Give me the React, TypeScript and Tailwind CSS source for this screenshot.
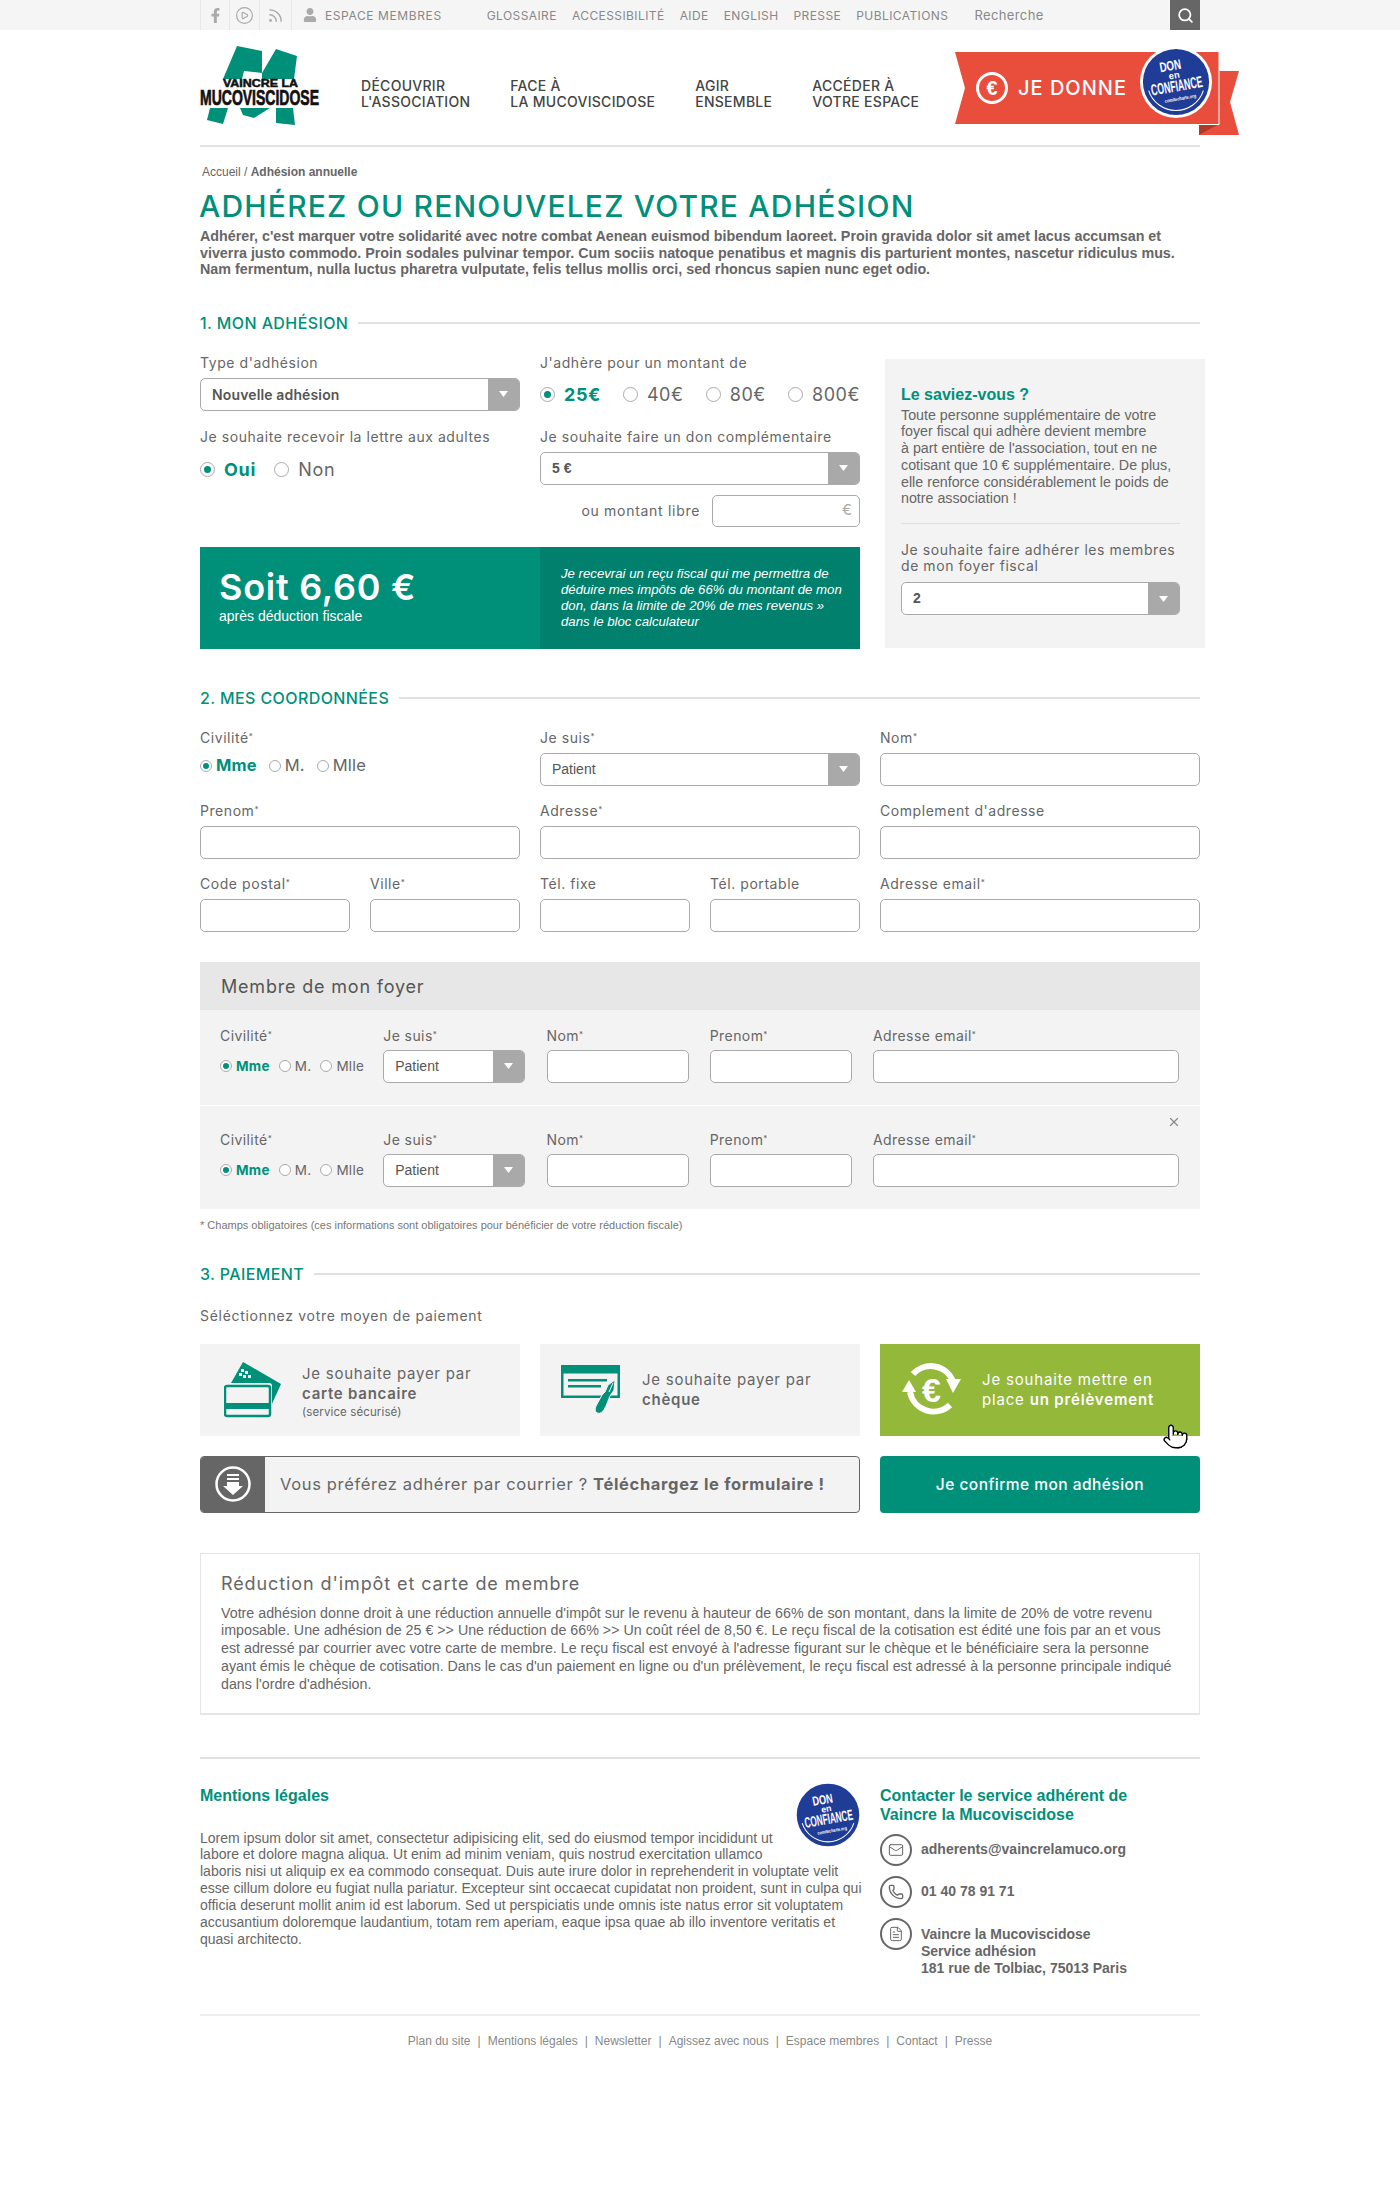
import React from 'react';
import { CirclePlay, FileText, Mail, Phone, Pointer, Rss, Search, X } from 'lucide-react';
import { FaFacebookF, FaUser } from 'react-icons/fa';

const arial = "[font-family:'Liberation_Sans',Arial,sans-serif]";

const Badge = ({ size }: { size: number }) => (
    <svg width={size} height={size} viewBox="0 0 100 100">
        <circle cx="50" cy="50" r="50" fill="#fff" />
        <circle cx="50" cy="50" r="46" fill="#1f3c96" />
        <path d="M12 62 A40 40 0 0 0 88 62" fill="none" stroke="#fff" strokeWidth="1.5" />
        <g transform="rotate(-10 50 50)" fill="#fff" textAnchor="middle" fontFamily="'Liberation Sans', Arial, sans-serif">
            <text x="46" y="33" fontSize="19" fontWeight="700" textLength="30" lengthAdjust="spacingAndGlyphs">DON</text>
            <text x="49" y="45" fontSize="13" fontWeight="700">en</text>
            <text x="50" y="63" fontSize="22" fontWeight="700" textLength="72" lengthAdjust="spacingAndGlyphs">CONFIANCE</text>
            <text x="52" y="76" fontSize="7" fontWeight="700" textLength="44" lengthAdjust="spacingAndGlyphs">comitecharte.org</text>
        </g>
    </svg>
);

const Logo = () => (
    <svg width="122" height="80" viewBox="0 0 122 80" className="overflow-visible">
        <g fill="#00907a">
            <polygon points="37,1 62,6 62,28 76,4 97,11 94,34 62,34 62,28 44,26 42,34 23,34" />
            <polygon points="10,63 28,63 23,79 7,75" />
            <polygon points="40,63 70,63 54,73 43,70" />
            <polygon points="76,63 93,63 95,80 76,78" />
        </g>
        <text x="23" y="41.5" fontSize="10" fontWeight="700" fontFamily="'Liberation Sans', Arial, sans-serif" textLength="75" lengthAdjust="spacingAndGlyphs" stroke="#111" strokeWidth="0.5" fill="#111">VAINCRE LA</text>
        <text x="0" y="60" fontSize="22" fontWeight="700" fontFamily="'Liberation Sans', Arial, sans-serif" textLength="119" lengthAdjust="spacingAndGlyphs" stroke="#111" strokeWidth="0.7" fill="#111">MUCOVISCIDOSE</text>
    </svg>
);

const Ribbon = () => (
    <div className="relative w-[284px] h-[83px] -mr-[39px] shrink-0">
        <svg width="284" height="83" viewBox="0 0 284 83" className="absolute inset-0">
            <polygon points="244,19 284,19 275,50 284,83 244,83" fill="#e94e3d" />
            <polygon points="244,72 264,72 244,83" fill="#b03a2a" />
            <polygon points="0,0 264,0 264,72 0,72 10,36" fill="#e94e3d" />
            <path d="M264 0 V72.5 H244" fill="none" stroke="#fff" />
            <circle cx="37" cy="36" r="14.5" fill="none" stroke="#fff" strokeWidth="3" />
            <text x="37" y="43" fontSize="20" fontWeight="700" fill="#fff" textAnchor="middle" fontFamily="'Liberation Sans', Arial, sans-serif">€</text>
        </svg>
        <span className="absolute left-[63px] top-[24px] text-[20px] leading-[24px] font-medium text-white tracking-[0.05em] whitespace-nowrap">JE DONNE</span>
        <div className="absolute left-[185px] -top-[6px]">
            <Badge size={72} />
        </div>
    </div>
);

const SectionTitle = ({ children }: { children: React.ReactNode }) => (
    <div className="flex items-center gap-[10px] h-[20px]">
        <span className="text-[16px] font-medium text-[#00907a] uppercase whitespace-nowrap tracking-[0.025em]">{children}</span>
        <div className="flex-1 h-[2px] bg-[#e0e0e0]" />
    </div>
);

const Label = ({ children }: { children: React.ReactNode }) => (
    <div className="text-[14px] leading-[16px] text-[#666] mb-[7px] whitespace-nowrap tracking-[0.04em]">{children}</div>
);

const Input = () => <div className="h-[33px] rounded-[5px] border border-[#aaa] bg-white" />;

const Select = ({ value, bold, sans }: { value: string; bold?: boolean; sans?: boolean }) => (
    <div className="flex h-[33px] rounded-[5px] border border-[#aaa] bg-white overflow-hidden">
        <div className={`flex-1 flex items-center pl-[11px] text-[#555] ${sans ? 'text-[14px] font-semibold tracking-[0.01em]' : `${arial} text-[14px]`} ${bold ? 'font-bold' : ''}`}>{value}</div>
        <div className="w-[31px] bg-[#a9a9a9] flex items-center justify-center">
            <svg width="9" height="6" viewBox="0 0 9 6"><polygon points="0,0 9,0 4.5,6" fill="#fff" /></svg>
        </div>
    </div>
);

const Radio = ({ label, checked, small }: { label: string; checked?: boolean; small?: boolean }) => (
    <div className={`flex items-center ${small ? 'gap-[4px]' : 'gap-[9px]'}`}>
        <span className={`rounded-full border border-[#aaa] bg-white flex items-center justify-center shrink-0 ${small ? 'w-[12px] h-[12px]' : 'w-[15px] h-[15px]'}`}>
            {checked && <span className={`rounded-full bg-[#00907a] ${small ? 'w-[6px] h-[6px]' : 'w-[7px] h-[7px]'}`} />}
        </span>
        <span className={checked ? 'font-bold text-[#00907a]' : 'text-[#666]'}>{label}</span>
    </div>
);

const MemberLabel = ({ children }: { children: React.ReactNode }) => (
    <div className="text-[14px] leading-[16px] text-[#666] mb-[6px] tracking-[0.03em]">{children}<sup className="text-[8px]">*</sup></div>
);

const MemberRow = ({ first }: { first?: boolean }) => (
    <div className={`relative grid grid-cols-[142px_142px_142px_142px_306px] gap-x-[21.25px] pl-[20px] pb-[22px] bg-[#f3f3f3] ${first ? 'pt-[18px]' : 'pt-[26px]'}`}>
        {!first && <X className="absolute right-[19px] top-[9px] text-[#888]" size={14} />}
        <div>
            <MemberLabel>Civilité</MemberLabel>
            <div className="flex items-center gap-[9px] h-[33px] text-[13.5px] tracking-[0.02em] whitespace-nowrap">
                <Radio label="Mme" checked small />
                <Radio label="M." small />
                <Radio label="Mlle" small />
            </div>
        </div>
        <div>
            <MemberLabel>Je suis</MemberLabel>
            <Select value="Patient" />
        </div>
        <div>
            <MemberLabel>Nom</MemberLabel>
            <Input />
        </div>
        <div>
            <MemberLabel>Prenom</MemberLabel>
            <Input />
        </div>
        <div>
            <MemberLabel>Adresse email</MemberLabel>
            <Input />
        </div>
    </div>
);

const Star = () => <sup className="text-[8px]">*</sup>;

export default function App() {
    return (
        <div className="bg-white [font-family:Inter,sans-serif] text-[#666] min-h-[2200px]">
            <div className="h-[30px] bg-[#f5f5f5]">
                <div className="w-[1000px] mx-auto h-full flex items-center text-[12px] tracking-[0.035em] text-[#888] uppercase">
                    <div className="flex items-center h-full text-[#aaa]">
                        <div className="w-[30px] h-full flex items-center justify-center border-x border-[#e8e8e8]"><FaFacebookF size={15} /></div>
                        <div className="w-[30px] h-full flex items-center justify-center border-r border-[#e8e8e8]"><CirclePlay size={19} strokeWidth={1.5} /></div>
                        <div className="w-[32px] h-full flex items-center justify-center border-r border-[#e8e8e8]"><Rss size={17} /></div>
                    </div>
                    <FaUser className="text-[#aaa] ml-[11px] mr-[8px]" size={14} />
                    <span className="mt-[2px] tracking-[0.05em]">Espace membres</span>
                    <div className="flex gap-[15px] ml-[45px] mt-[2px]">
                        <span>Glossaire</span>
                        <span>Accessibilité</span>
                        <span>Aide</span>
                        <span>English</span>
                        <span>Presse</span>
                        <span>Publications</span>
                    </div>
                    <span className="ml-[26px] mt-[2px] normal-case text-[13px] tracking-[0.03em]">Recherche</span>
                    <div className="ml-auto w-[30px] h-full bg-[#666] flex items-center justify-center"><Search className="text-white" size={17} strokeWidth={2.5} /></div>
                </div>
            </div>

            <div className="w-[1000px] mx-auto">
                <div className="flex h-[117px] border-b-2 border-[#e3e3e3] items-start">
                    <div className="pt-[15px] mr-[39px]"><Logo /></div>
                    <div className="flex pt-[48px] text-[14px] leading-[16px] font-medium text-[#444] uppercase whitespace-nowrap gap-[40px] flex-1 tracking-[0.02em]">
                        <span>Découvrir<br />L'association</span>
                        <span>Face à<br />la mucoviscidose</span>
                        <span>Agir<br />ensemble</span>
                        <span>Accéder à<br />votre espace</span>
                    </div>
                    <div className="mt-[22px]"><Ribbon /></div>
                </div>

                <div className={`${arial} text-[12px] leading-[14px] mt-[18px] pl-[2px] text-[#666]`}>
                    Accueil / <b>Adhésion annuelle</b>
                </div>
                <h1 className="text-[30px] leading-[36px] font-medium text-[#00907a] uppercase mt-[9px] -ml-[1px] whitespace-nowrap tracking-[1.2px]">Adhérez ou renouvelez votre adhésion</h1>
                <p className={`${arial} text-[14.3px] leading-[16.5px] font-bold text-[#666] mt-[4px] whitespace-nowrap`}>
                    Adhérer, c'est marquer votre solidarité avec notre combat Aenean euismod bibendum laoreet. Proin gravida dolor sit amet lacus accumsan et<br />
                    viverra justo commodo. Proin sodales pulvinar tempor. Cum sociis natoque penatibus et magnis dis parturient montes, nascetur ridiculus mus.<br />
                    Nam fermentum, nulla luctus pharetra vulputate, felis tellus mollis orci, sed rhoncus sapien nunc eget odio.
                </p>

                <div className="mt-[35px]"><SectionTitle>1. Mon adhésion</SectionTitle></div>
                <div className="flex mt-[22px] items-start">
                    <div className="w-[660px]">
                        <div className="grid grid-cols-[320px_320px] gap-x-[20px]">
                            <div>
                                <Label>Type d'adhésion</Label>
                                <Select value="Nouvelle adhésion" sans />
                                <div className="mt-[18px]"><Label>Je souhaite recevoir la lettre aux adultes</Label></div>
                                <div className="flex items-center gap-[18px] text-[18px] tracking-[0.04em] mt-[11px]">
                                    <Radio label="Oui" checked />
                                    <Radio label="Non" />
                                </div>
                            </div>
                            <div>
                                <Label>J'adhère pour un montant de</Label>
                                <div className="flex justify-between text-[18px] tracking-[0.03em] h-[33px] items-center">
                                    <Radio label="25€" checked />
                                    <Radio label="40€" />
                                    <Radio label="80€" />
                                    <Radio label="800€" />
                                </div>
                                <div className="mt-[18px]"><Label>Je souhaite faire un don complémentaire</Label></div>
                                <Select value="5 €" bold />
                                <div className="flex items-center justify-end gap-[12px] mt-[10px]">
                                    <span className="text-[14px] tracking-[0.05em] text-[#666]">ou montant libre</span>
                                    <div className="w-[148px] h-[32px] rounded-[5px] border border-[#aaa] bg-white flex items-center justify-end pr-[7px] text-[15px] text-[#aaa]">€</div>
                                </div>
                            </div>
                        </div>
                        <div className="flex h-[102px] mt-[20px] text-white">
                            <div className="w-[340px] bg-[#00907a] pl-[19px] pt-[20px]">
                                <div className="text-[36px] leading-[40px] font-semibold tracking-[0.02em]">Soit 6,60 €</div>
                                <div className={`${arial} text-[14px] leading-[16px] mt-[1px]`}>après déduction fiscale</div>
                            </div>
                            <div className={`w-[320px] bg-[#00806d] pl-[21px] pt-[19px] ${arial} italic text-[13.2px] leading-[16px] whitespace-nowrap`}>
                                Je recevrai un reçu fiscal qui me permettra de<br />
                                déduire mes impôts de 66% du montant de mon<br />
                                don, dans la limite de 20% de mes revenus »<br />
                                dans le bloc calculateur
                            </div>
                        </div>
                    </div>
                    <div className="w-[320px] h-[289px] ml-[25px] mt-[4px] bg-[#f3f3f3] pl-[16px] pr-[25px] pt-[27px] shrink-0">
                        <div className={`${arial} font-bold text-[16px] leading-[18px] text-[#00907a]`}>Le saviez-vous ?</div>
                        <p className={`${arial} text-[14.25px] leading-[16.8px] text-[#666] mt-[3px] whitespace-nowrap`}>
                            Toute personne supplémentaire de votre<br />
                            foyer fiscal qui adhère devient membre<br />
                            à part entière de l'association, tout en ne<br />
                            cotisant que 10 € supplémentaire. De plus,<br />
                            elle renforce considérablement le poids de<br />
                            notre association !
                        </p>
                        <div className="h-px bg-[#ddd] mt-[16px]" />
                        <div className="text-[14px] leading-[16px] text-[#666] mt-[18px] whitespace-nowrap tracking-[0.04em]">Je souhaite faire adhérer les membres<br />de mon foyer fiscal</div>
                        <div className="mt-[8px]"><Select value="2" bold /></div>
                    </div>
                </div>

                <div className="mt-[39px]"><SectionTitle>2. Mes coordonnées</SectionTitle></div>
                <div className="grid grid-cols-[320px_320px_320px] gap-x-[20px] gap-y-[17px] mt-[22px]">
                    <div>
                        <Label>Civilité<Star /></Label>
                        <div className="flex items-center gap-[12px] text-[16.5px] tracking-[0.01em] h-[26px]">
                            <Radio label="Mme" checked small />
                            <Radio label="M." small />
                            <Radio label="Mlle" small />
                        </div>
                    </div>
                    <div><Label>Je suis<Star /></Label><Select value="Patient" /></div>
                    <div><Label>Nom<Star /></Label><Input /></div>
                    <div><Label>Prenom<Star /></Label><Input /></div>
                    <div><Label>Adresse<Star /></Label><Input /></div>
                    <div><Label>Complement d'adresse</Label><Input /></div>
                    <div className="grid grid-cols-2 gap-x-[20px]">
                        <div><Label>Code postal<Star /></Label><Input /></div>
                        <div><Label>Ville<Star /></Label><Input /></div>
                    </div>
                    <div className="grid grid-cols-2 gap-x-[20px]">
                        <div><Label>Tél. fixe</Label><Input /></div>
                        <div><Label>Tél. portable</Label><Input /></div>
                    </div>
                    <div><Label>Adresse email<Star /></Label><Input /></div>
                </div>

                <div className="mt-[30px]">
                    <div className="h-[48px] bg-[#e7e7e7] flex items-center pl-[21px] pt-[2px] text-[18px] tracking-[0.045em] text-[#555]">Membre de mon foyer</div>
                    <MemberRow first />
                    <div className="h-px bg-white" />
                    <MemberRow />
                </div>
                <div className={`${arial} text-[11px] leading-[14px] mt-[9px] text-[#777]`}>* Champs obligatoires (ces informations sont obligatoires pour bénéficier de votre réduction fiscale)</div>

                <div className="mt-[32px]"><SectionTitle>3. Paiement</SectionTitle></div>
                <div className="text-[14px] tracking-[0.05em] leading-[16px] mt-[24px] text-[#666]">Séléctionnez votre moyen de paiement</div>

                <div className="grid grid-cols-[320px_320px_320px] gap-x-[20px] mt-[20px]">
                    <div className="h-[92px] bg-[#f3f3f3] flex items-center pl-[24px] gap-[18px]">
                        <svg width="60" height="56" viewBox="0 0 60 56">
                            <polygon points="19,0 57,22 47,44 7,21" fill="#00907a" />
                            <g fill="#fff"><rect x="17" y="7" width="3" height="3" /><rect x="21" y="9" width="3" height="3" /><rect x="15" y="11" width="3" height="3" /><rect x="19" y="13" width="3" height="3" /><rect x="24" y="13" width="3" height="3" /></g>
                            <rect x="0" y="21" width="48" height="34" rx="3" fill="#f3f3f3" />
                            <rect x="1" y="24" width="45" height="30" rx="2" fill="#f3f3f3" stroke="#00907a" strokeWidth="2.5" />
                            <rect x="1" y="41" width="45" height="6" fill="#00907a" />
                        </svg>
                        <div className="text-[15px] leading-[20px] text-[#666] tracking-[0.05em] pt-[3px]">
                            Je souhaite payer par<br />
                            <span className="font-semibold">carte bancaire</span><br />
                            <span className="text-[11.5px] leading-[14px] tracking-[0.01em] block mt-[1px]">(service sécurisé)</span>
                        </div>
                    </div>
                    <div className="h-[92px] bg-[#f3f3f3] flex items-center pl-[21px] gap-[21px]">
                        <svg width="60" height="50" viewBox="0 0 60 50">
                            <rect x="0" y="0" width="59" height="33" fill="#00907a" />
                            <rect x="2.5" y="8.5" width="54" height="22" fill="#f3f3f3" />
                            <rect x="7" y="14" width="39" height="2.5" fill="#00907a" />
                            <rect x="7" y="20" width="33" height="2.5" fill="#00907a" />
                            <path d="M54 15 L53 25 L49 31 L45 41 Q41 50 36 48 Q33 46 35 41 L41 30 L44 27 L47 20 Z" fill="#00907a" stroke="#f3f3f3" strokeWidth="1" />
                            <path d="M52 18 L48 27" stroke="#f3f3f3" strokeWidth="1" fill="none" />
                        </svg>
                        <div className="text-[15px] leading-[20px] text-[#666] tracking-[0.05em]">Je souhaite payer par<br /><span className="font-semibold">chèque</span></div>
                    </div>
                    <div className="relative h-[92px] bg-[#93b83a] flex items-center pl-[22px] gap-[21px] text-white">
                        <svg width="59" height="57" viewBox="0 0 59 57">
                            <g fill="none" stroke="#fff" strokeWidth="6">
                                <path d="M11 13 A24 24 0 0 1 51 20" />
                                <path d="M48 44 A24 24 0 0 1 8 31" />
                            </g>
                            <polygon points="44,18 59,18 51,32" fill="#fff" />
                            <polygon points="0,31 14,31 7,19" fill="#fff" />
                            <text x="29.5" y="41" fontSize="34" fontWeight="700" fill="#fff" textAnchor="middle" fontFamily="'Liberation Sans', Arial, sans-serif">€</text>
                        </svg>
                        <div className="text-[15px] leading-[20px] tracking-[0.055em] whitespace-nowrap">Je souhaite mettre en<br />place <span className="font-semibold">un prélèvement</span></div>
                        <Pointer className="absolute left-[282px] top-[79px] text-black" fill="#fff" size={27} strokeWidth={1.2} />
                    </div>
                </div>

                <div className="grid grid-cols-[660px_320px] gap-x-[20px] mt-[20px] h-[57px]">
                    <div className="flex rounded-[4px] border border-[#666] bg-[#f3f3f3] overflow-hidden">
                        <div className="w-[64px] bg-[#666] flex items-center justify-center shrink-0">
                            <svg width="36" height="36" viewBox="0 0 36 36">
                                <circle cx="18" cy="18" r="16.5" fill="none" stroke="#fff" strokeWidth="2.5" />
                                <rect x="12" y="8" width="12" height="2" fill="#fff" />
                                <rect x="12" y="12" width="12" height="2" fill="#fff" />
                                <polygon points="12,16 24,16 24,20 28,20 18,29 8,20 12,20" fill="#fff" />
                            </svg>
                        </div>
                        <div className="flex items-center pl-[15px] text-[16.5px] text-[#666] whitespace-nowrap tracking-[0.04em]">Vous préférez adhérer par courrier ?&nbsp;<b>Téléchargez le formulaire !</b></div>
                    </div>
                    <div className="rounded-[4px] bg-[#00907a] flex items-center justify-center pt-[1px] text-[15.5px] tracking-[0.03em] font-medium text-white">Je confirme mon adhésion</div>
                </div>

                <div className="h-[162px] mt-[40px] border border-[#e5e5e5] border-b-2 pl-[20px] pt-[19px]">
                    <div className="text-[18px] leading-[22px] tracking-[0.05em] text-[#666]">Réduction d'impôt et carte de membre</div>
                    <p className={`${arial} text-[14.25px] leading-[17.8px] text-[#666] mt-[10px] whitespace-nowrap`}>
                        Votre adhésion donne droit à une réduction annuelle d'impôt sur le revenu à hauteur de 66% de son montant, dans la limite de 20% de votre revenu<br />
                        imposable. Une adhésion de 25 € &gt;&gt; Une réduction de 66% &gt;&gt; Un coût réel de 8,50 €. Le reçu fiscal de la cotisation est édité une fois par an et vous<br />
                        est adressé par courrier avec votre carte de membre. Le reçu fiscal est envoyé à l'adresse figurant sur le chèque et le bénéficiaire sera la personne<br />
                        ayant émis le chèque de cotisation. Dans le cas d'un paiement en ligne ou d'un prélèvement, le reçu fiscal est adressé à la personne principale indiqué<br />
                        dans l'ordre d'adhésion.
                    </p>
                </div>

                <div className="h-[2px] bg-[#e0e0e0] mt-[42px]" />

                <div className={`flex h-[255px] pt-[28px] ${arial}`}>
                    <div className="w-[662px] shrink-0">
                        <div className="float-right -mt-[6px]"><Badge size={68} /></div>
                        <div className="font-bold text-[16px] leading-[18px] text-[#00907a]">Mentions légales</div>
                        <p className="text-[14px] leading-[16.9px] text-[#666] mt-[25px] whitespace-nowrap">
                            Lorem ipsum dolor sit amet, consectetur adipisicing elit, sed do eiusmod tempor incididunt ut<br />
                            labore et dolore magna aliqua. Ut enim ad minim veniam, quis nostrud exercitation ullamco<br />
                            laboris nisi ut aliquip ex ea commodo consequat. Duis aute irure dolor in reprehenderit in voluptate velit<br />
                            esse cillum dolore eu fugiat nulla pariatur. Excepteur sint occaecat cupidatat non proident, sunt in culpa qui<br />
                            officia deserunt mollit anim id est laborum. Sed ut perspiciatis unde omnis iste natus error sit voluptatem<br />
                            accusantium doloremque laudantium, totam rem aperiam, eaque ipsa quae ab illo inventore veritatis et<br />
                            quasi architecto.
                        </p>
                    </div>
                    <div className="ml-[18px] -mt-[1px]">
                        <div className="font-bold text-[16px] leading-[19px] text-[#00907a] whitespace-nowrap">Contacter le service adhérent de<br />Vaincre la Mucoviscidose</div>
                        <div className="flex gap-[9px] mt-[10px] items-center font-bold text-[14px] text-[#666]">
                            <div className="w-[32px] h-[32px] rounded-full border-2 border-[#666] flex items-center justify-center"><Mail size={16} strokeWidth={1.5} /></div>
                            <span>adherents@vaincrelamuco.org</span>
                        </div>
                        <div className="flex gap-[9px] mt-[10px] items-center font-bold text-[14px] text-[#666]">
                            <div className="w-[32px] h-[32px] rounded-full border-2 border-[#666] flex items-center justify-center"><Phone size={16} strokeWidth={2} /></div>
                            <span>01 40 78 91 71</span>
                        </div>
                        <div className="flex gap-[9px] mt-[10px] items-start font-bold text-[14px] leading-[17px] text-[#666]">
                            <div className="w-[32px] h-[32px] rounded-full border-2 border-[#666] flex items-center justify-center shrink-0"><FileText size={16} strokeWidth={1.5} /></div>
                            <span className="pt-[8px]">Vaincre la Mucoviscidose<br />Service adhésion<br />181 rue de Tolbiac, 75013 Paris</span>
                        </div>
                    </div>
                </div>

                <div className="h-[2px] bg-[#eeeeee]" />
                <div className={`${arial} flex justify-center gap-[7px] text-[12px] leading-[14px] text-[#888] mt-[18px]`}>
                    <span>Plan du site</span><span>|</span>
                    <span>Mentions légales</span><span>|</span>
                    <span>Newsletter</span><span>|</span>
                    <span>Agissez avec nous</span><span>|</span>
                    <span>Espace membres</span><span>|</span>
                    <span>Contact</span><span>|</span>
                    <span>Presse</span>
                </div>
            </div>
        </div>
    );
}
